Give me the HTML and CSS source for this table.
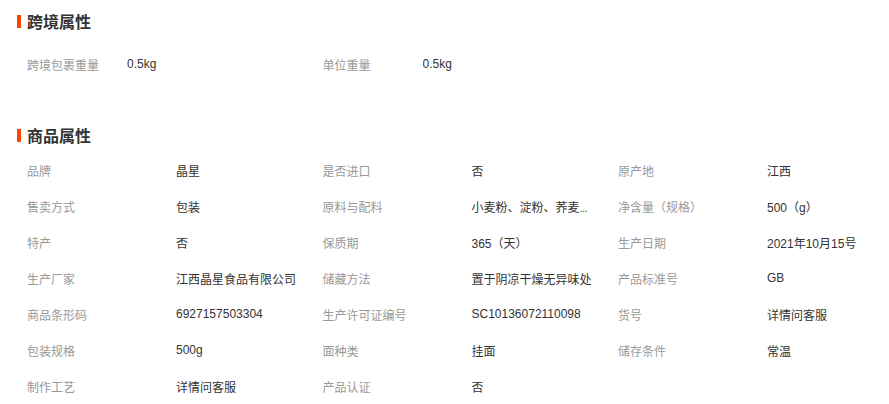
FILE: index.html
```html
<!DOCTYPE html>
<html lang="zh-CN">
<head>
    <meta charset="UTF-8">
    <meta name="viewport" content="width=device-width, initial-scale=1.0">
    <title>商品属性</title>
    <link rel="stylesheet" href="styles.css">
</head>
<body>

    <div class="section section-cross">
        <h2 class="section-title">跨境属性</h2>
        <ul class="attrs attrs-cross">
            <li><span class="label">跨境包裹重量</span><span class="value">0.5kg</span></li>
            <li><span class="label">单位重量</span><span class="value">0.5kg</span></li>
        </ul>
    </div>

    <div class="section section-goods">
        <h2 class="section-title">商品属性</h2>
        <ul class="attrs">
            <li><span class="label">品牌</span><span class="value">晶星</span></li>
            <li><span class="label">是否进口</span><span class="value">否</span></li>
            <li><span class="label">原产地</span><span class="value">江西</span></li>

            <li><span class="label">售卖方式</span><span class="value">包装</span></li>
            <li><span class="label">原料与配料</span><span class="value" title="小麦粉、淀粉、荞麦粉、食用盐">小麦粉、淀粉、荞麦<i class="more">...</i></span></li>
            <li><span class="label">净含量（规格）</span><span class="value">500（g）</span></li>

            <li><span class="label">特产</span><span class="value">否</span></li>
            <li><span class="label">保质期</span><span class="value">365（天）</span></li>
            <li><span class="label">生产日期</span><span class="value">2021年10月15号</span></li>

            <li><span class="label">生产厂家</span><span class="value">江西晶星食品有限公司</span></li>
            <li><span class="label">储藏方法</span><span class="value">置于阴凉干燥无异味处</span></li>
            <li><span class="label">产品标准号</span><span class="value">GB</span></li>

            <li><span class="label">商品条形码</span><span class="value">6927157503304</span></li>
            <li><span class="label">生产许可证编号</span><span class="value">SC10136072110098</span></li>
            <li><span class="label">货号</span><span class="value">详情问客服</span></li>

            <li><span class="label">包装规格</span><span class="value">500g</span></li>
            <li><span class="label">面种类</span><span class="value">挂面</span></li>
            <li><span class="label">储存条件</span><span class="value">常温</span></li>

            <li><span class="label">制作工艺</span><span class="value">详情问客服</span></li>
            <li><span class="label">产品认证</span><span class="value">否</span></li>
        </ul>
    </div>

</body>
</html>
```

FILE: styles.css
```css
*{
    margin: 0;
    padding: 0;
    box-sizing: border-box;
}
body{
    background-color: #fff;
    font-family: "Liberation Sans", "Noto Sans CJK SC", sans-serif;
    font-size: 12px;
    color: #333;
}
.section{
    padding: 0 17px;
}
.section-cross{
    padding-top: 6px;
}
.section-goods{
    margin-top: 38px;
}
.section-title{
    display: flex;
    align-items: center;
    gap: 6px;
    height: 30px;
    font-size: 16px;
    font-weight: bold;
    color: #333;
    font-family: "Noto Sans CJK SC", sans-serif;
}
.section-title::before{
    content: "";
    width: 4px;
    height: 13px;
    background-color: #ff4400;
}
.attrs{
    list-style: none;
    display: grid;
    grid-template-columns: repeat(3, 295.5px);
    padding-left: 10px;
    margin-top: 2px;
}
.attrs li{
    display: flex;
    align-items: center;
    height: 36px;
}
.attrs .label{
    width: 149px;
    flex-shrink: 0;
    color: #999;
}
.attrs .value{
    width: 122px;
    color: #333;
    white-space: nowrap;
    overflow: hidden;
    text-overflow: ellipsis;
}
.attrs .more{
    font-style: normal;
    color: #666;
    letter-spacing: -1px;
}
.attrs-cross{
    margin-top: 10px;
}
.attrs-cross .label{
    width: 100px;
}
```
